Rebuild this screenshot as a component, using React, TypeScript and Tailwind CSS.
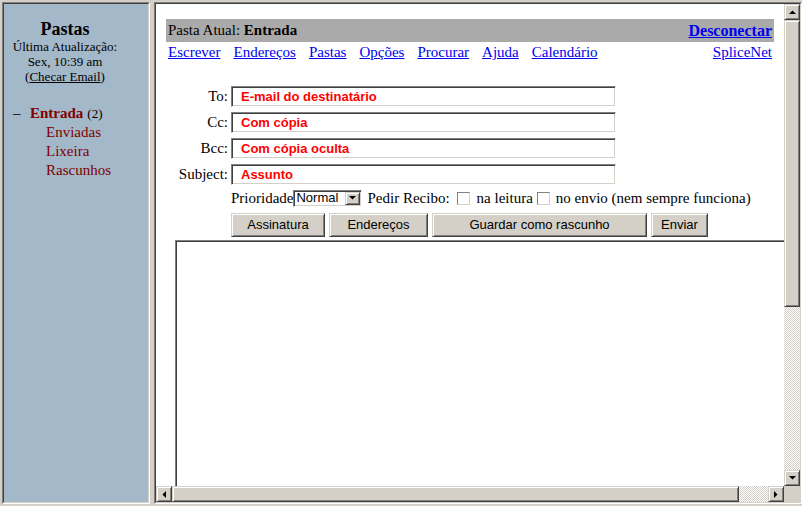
import React from "react";

const serif = "font-['Liberation_Serif',serif]";
const sans = "font-['Liberation_Sans',Arial,sans-serif]";

const raised =
  "bg-[#d4d0c8] border border-t-[#d4d0c8] border-l-[#d4d0c8] border-r-[#404040] border-b-[#404040] shadow-[inset_1px_1px_#ffffff,inset_-1px_-1px_#808080]";
const sunken =
  "border border-t-[#808080] border-l-[#808080] border-r-white border-b-white shadow-[inset_1px_1px_#404040,inset_-1px_-1px_#d4d0c8]";
const checker =
  "bg-[image:repeating-conic-gradient(#d4d0c8_0_25%,#ffffff_0_50%)] bg-[length:2px_2px]";

const Arrow = ({ dir }: { dir: "up" | "down" | "left" | "right" }) => {
  const pts = {
    up: "0,4 7,4 3.5,0.5",
    down: "0,0 7,0 3.5,3.5",
    left: "4,0 4,7 0.5,3.5",
    right: "0,0 0,7 3.5,3.5",
  }[dir];
  const vert = dir === "up" || dir === "down";
  return (
    <svg width={vert ? 7 : 4} height={vert ? 4 : 7} viewBox={vert ? "0 0 7 4" : "0 0 4 7"}>
      <polygon points={pts} fill="#000" />
    </svg>
  );
};

const ScrollBtn = ({ dir }: { dir: "up" | "down" | "left" | "right" }) => (
  <div className={`w-[16px] h-[16px] shrink-0 flex items-center justify-center ${raised}`}>
    <Arrow dir={dir} />
  </div>
);

const Field = ({ label, value }: { label: string; value: string }) => (
  <div className="flex items-center h-[21px]">
    <div className="w-[62px] text-right text-[15px] leading-none">{label}</div>
    <div
      className={`ml-[3px] w-[385px] h-[21px] bg-white flex items-center pl-[9px] text-[13px] font-bold text-[#ff0000] ${sans} ${sunken}`}
    >
      {value}
    </div>
  </div>
);

const CheckBox = () => (
  <span
    className="inline-block w-[13px] h-[13px] bg-white border border-t-[#808080] border-l-[#808080] border-r-[#d4d0c8] border-b-[#d4d0c8]"
  />
);

const links = ["Escrever", "Endereços", "Pastas", "Opções", "Procurar", "Ajuda", "Calendário"];

export default function App() {
  return (
    <div className={`w-[802px] h-[506px] bg-[#d4d0c8] flex pt-[2px] pl-[2px] gap-[4px] overflow-hidden text-black ${serif}`}>
      {/* left frame */}
      <div className="w-[148px] h-[502px] shrink-0 border border-t-[#808080] border-l-[#808080] border-r-white border-b-white">
        <div className="w-full h-full bg-[#a3b8c9] border border-t-[#404040] border-l-[#404040] border-r-[#d4d0c8] border-b-[#d4d0c8]">
          <div className="w-[122px] pt-[15px] text-center">
            <div className="text-[18px] font-bold leading-[20px]">Pastas</div>
            <div className="text-[13px] leading-[15px]">Última Atualização:</div>
            <div className="text-[13px] leading-[15px]">Sex, 10:39 am</div>
            <div className="text-[13px] leading-[15px]">
              (<span className="underline">Checar Email</span>)
            </div>
          </div>
          <div className="mt-[20px] pl-[9px] text-[15px] leading-[19px]">
            <div className="flex items-baseline">
              <span className="w-[17px]">–</span>
              <span className="font-bold text-[#800000]">Entrada</span>
              <span className="ml-[4px] text-[13px]">(2)</span>
            </div>
            <div className="pl-[33px] text-[#800000]">Enviadas</div>
            <div className="pl-[33px] text-[#800000]">Lixeira</div>
            <div className="pl-[33px] text-[#800000]">Rascunhos</div>
          </div>
        </div>
      </div>

      {/* right frame */}
      <div className="w-[648px] h-[502px] shrink-0 border border-t-[#808080] border-l-[#808080] border-r-white border-b-white">
        <div className="w-full h-full flex flex-col border border-t-[#404040] border-l-[#404040] border-r-[#d4d0c8] border-b-[#d4d0c8]">
          <div className="flex h-[482px]">
            <div className="w-[628px] h-[482px] bg-white overflow-hidden pt-[15px] px-[10px]">
              <div className="h-[23px] bg-[#aaaaaa] flex items-center justify-between px-[2px]">
                <div className="text-[15px]">
                  Pasta Atual: <b>Entrada</b>
                </div>
                <a className="text-[16px] font-bold text-[#0000ee] underline">Desconectar</a>
              </div>
              <div className="h-[20px] flex items-center justify-between px-[2px] text-[15px] text-[#0000ee]">
                <div className="flex gap-[13px]">
                  {links.map((l) => (
                    <a key={l} className="underline">
                      {l}
                    </a>
                  ))}
                </div>
                <a className="underline">SpliceNet</a>
              </div>

              <div className="mt-[24px] flex flex-col gap-[5px]">
                <Field label="To:" value="E-mail do destinatário" />
                <Field label="Cc:" value="Com cópia" />
                <Field label="Bcc:" value="Com cópia oculta" />
                <Field label="Subject:" value="Assunto" />
              </div>

              <div className="mt-[4px] ml-[65px] h-[18px] flex items-center text-[15px] whitespace-nowrap">
                <span>Prioridade</span>
                <div className={`w-[69px] h-[17px] bg-white flex items-center ${sunken}`}>
                  <span className={`flex-1 pl-[2px] text-[13px] ${sans}`}>Normal</span>
                  <div className={`w-[15px] h-[13px] mr-[1px] flex items-center justify-center ${raised}`}>
                    <Arrow dir="down" />
                  </div>
                </div>
                <span className="ml-[5px]">Pedir Recibo:</span>
                <span className="ml-[7px] flex"><CheckBox /></span>
                <span className="ml-[7px]">na leitura</span>
                <span className="ml-[4px] flex"><CheckBox /></span>
                <span className="ml-[6px]">no envio (nem sempre funciona)</span>
              </div>

              <div className={`mt-[6px] ml-[65px] flex gap-[4px] text-[13px] ${sans}`}>
                <button className={`w-[94px] h-[24px] ${raised}`}>Assinatura</button>
                <button className={`w-[99px] h-[24px] ${raised}`}>Endereços</button>
                <button className={`w-[215px] h-[24px] ${raised}`}>Guardar como rascunho</button>
                <button className={`w-[57px] h-[24px] ${raised}`}>Enviar</button>
              </div>

              <div className={`mt-[3px] ml-[9px] w-[700px] h-[300px] bg-white ${sunken}`} />
            </div>

            {/* vertical scrollbar */}
            <div className="w-[16px] h-[482px] flex flex-col">
              <ScrollBtn dir="up" />
              <div className={`h-[287px] ${raised}`} />
              <div className={`flex-1 ${checker}`} />
              <ScrollBtn dir="down" />
            </div>
          </div>

          {/* horizontal scrollbar */}
          <div className="flex h-[16px]">
            <div className="w-[628px] flex">
              <ScrollBtn dir="left" />
              <div className={`w-[567px] h-[16px] ${raised}`} />
              <div className={`flex-1 ${checker}`} />
              <ScrollBtn dir="right" />
            </div>
            <div className="w-[16px] h-[16px] bg-[#d4d0c8]" />
          </div>
        </div>
      </div>
    </div>
  );
}
